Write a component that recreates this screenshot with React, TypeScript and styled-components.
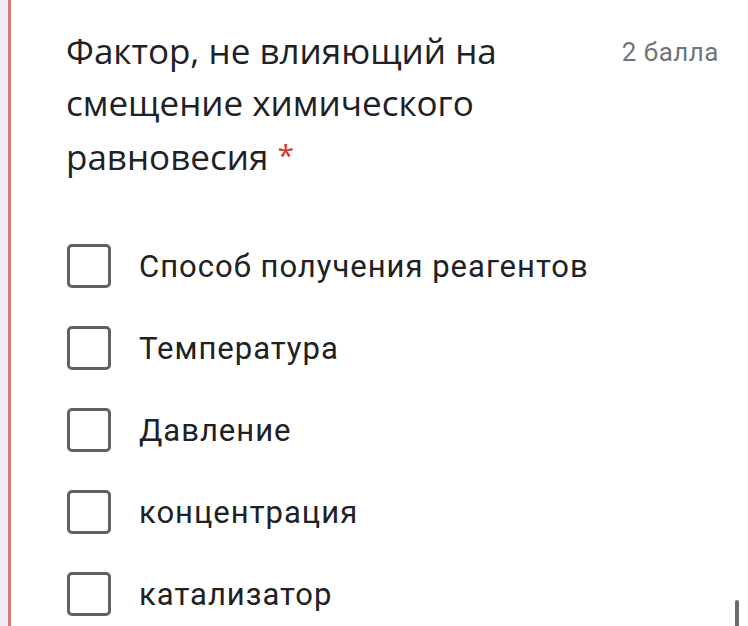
import styled, { createGlobalStyle } from "styled-components";

const GlobalStyle = createGlobalStyle`
	html, body {
		margin: 0;
		padding: 0;
		background: #ffffff;
		overflow: hidden;
	}
`;

const options = [
	"Способ получения реагентов",
	"Температура",
	"Давление",
	"концентрация",
	"катализатор",
];

function App()
{
	return (
	<>
		<GlobalStyle/>
		<Page>
			<Strip/>
			<Card>
				<Header>
					<Title>
						Фактор, не влияющий на смещение химического равновесия <Required>*</Required>
					</Title>
					<Points>2 балла</Points>
				</Header>
				<List>
					{options.map((o) => (
						<Option key={o}>
							<Box/>
							<Label>{o}</Label>
						</Option>
					))}
				</List>
			</Card>
			<ScrollThumb/>
		</Page>
	</>
	)
}

export default App

const Page = styled.div`
	display: flex;
	width: 748px;
	height: 626px;
	position: relative;
	overflow: hidden;
	background: #ffffff;
`;

const Strip = styled.div`
	width: 8px;
	flex: none;
	background: #efecf6;
	border-right: 3px solid #d47a76;
`;

const Card = styled.div`
	flex: 1;
	padding: 25px 29px 0 55px;
`;

const Header = styled.div`
	display: flex;
	justify-content: space-between;
	align-items: flex-start;
`;

const Title = styled.div`
	width: 490px;
	font-family: "Open Sans", sans-serif;
	font-size: 35px;
	line-height: 52px;
	color: #202124;
`;

const Required = styled.span`
	color: #d93025;
	font-size: 30px;
	vertical-align: 4px;
`;

const Points = styled.div`
	font-family: Roboto, sans-serif;
	font-size: 26px;
	letter-spacing: 0.5px;
	line-height: 54px;
	color: #70757a;
	white-space: nowrap;
`;

const List = styled.div`
	display: flex;
	flex-direction: column;
	gap: 38px;
	margin-top: 61px;
`;

const Option = styled.div`
	display: flex;
	align-items: center;
	gap: 28px;
	height: 44px;
`;

const Box = styled.div`
	width: 38px;
	height: 38px;
	flex: none;
	border: 3px solid #5f6368;
	border-radius: 5px;
	margin-left: 1px;
`;

const Label = styled.div`
	font-family: Roboto, sans-serif;
	font-size: 31px;
	letter-spacing: 1px;
	color: #202124;
`;

const ScrollThumb = styled.div`
	position: absolute;
	right: 9px;
	bottom: 0;
	width: 4px;
	height: 26px;
	border-radius: 2px 2px 0 0;
	background: #6b6b6b;
`;
